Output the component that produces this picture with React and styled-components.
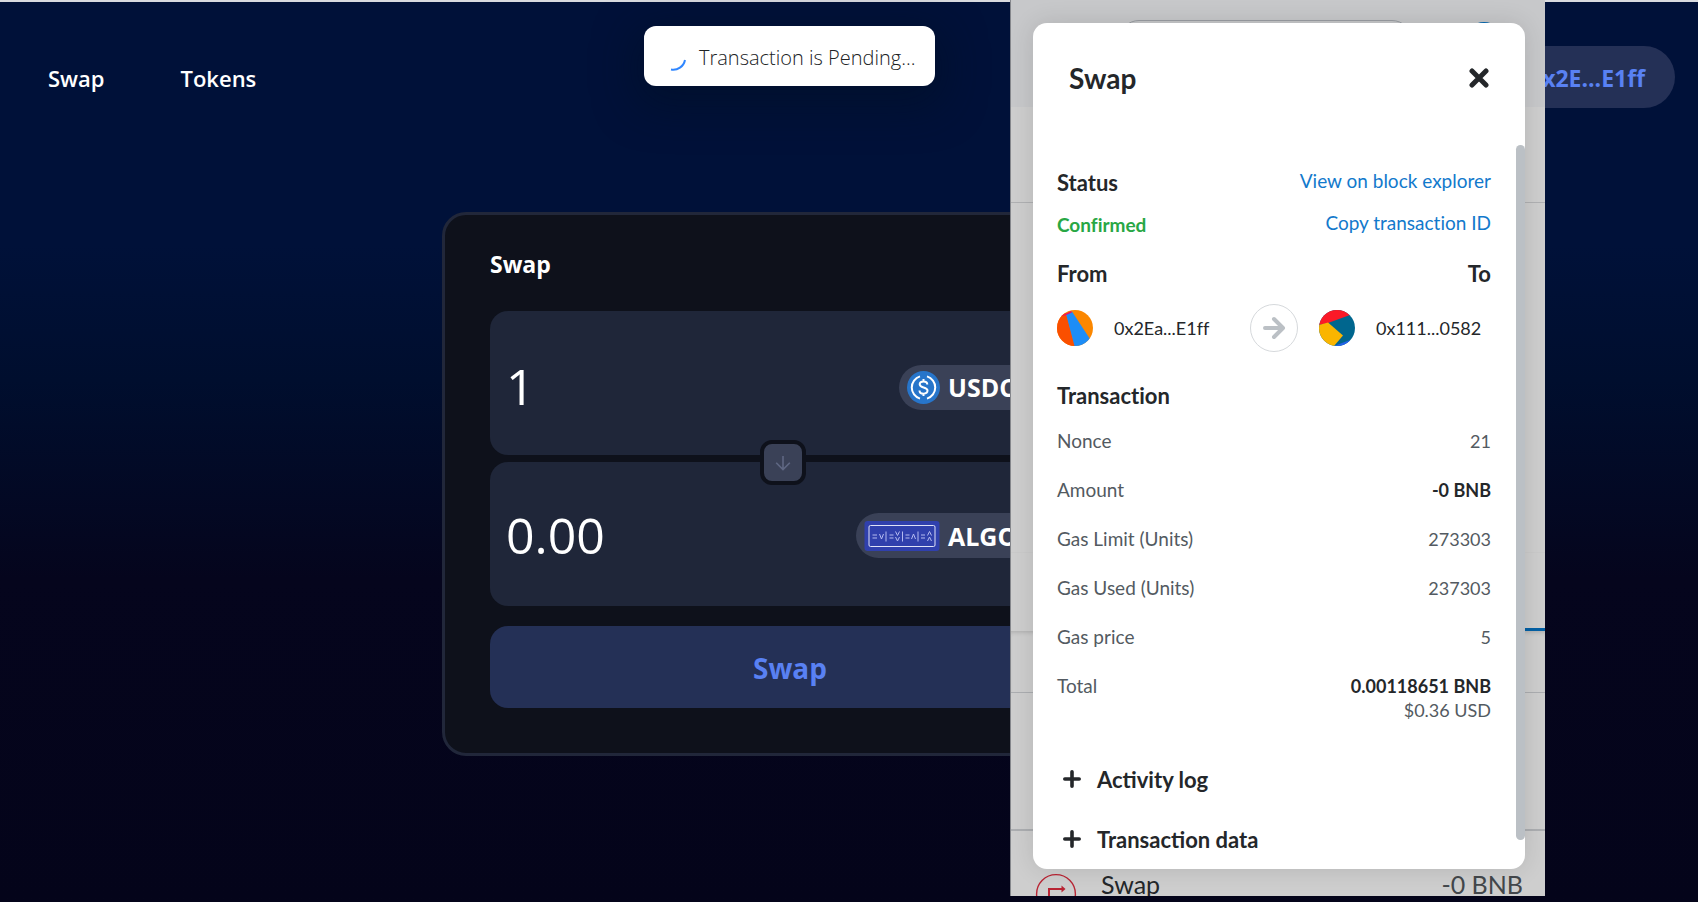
import { useState } from "react";
import styled, { createGlobalStyle } from "styled-components";
import { ChevronDown } from "lucide-react";

const details = [
    { label: "Nonce", value: "21" },
    { label: "Amount", value: "-0 BNB", strong: true },
    { label: "Gas Limit (Units)", value: "273303" },
    { label: "Gas Used (Units)", value: "237303" },
    { label: "Gas price", value: "5" },
    { label: "Total", value: "0.00118651 BNB", strong: true, note: "$0.36 USD" },
];

export default function App(){
    const [amount, setAmount] = useState("1");
    const [open, setOpen] = useState(true);

    return(
        <Page>
            <GlobalStyle />
            <Header>
                <nav>
                    <NavLink href="#swap">Swap</NavLink>
                    <NavLink href="#tokens">Tokens</NavLink>
                </nav>
                <ConnectButton>0x2E...E1ff</ConnectButton>
            </Header>

            <Main>
                <TradeBox>
                    <h4>Swap</h4>
                    <Inputs>
                        <TokenField>
                            <AmountInput aria-label="Amount to pay" value={amount} onChange={(e) => setAmount(e.target.value)} />
                            <TokenButton>
                                <UsdcIcon />
                                <span>USDC</span>
                                <ChevronDown size={20} />
                            </TokenButton>
                        </TokenField>
                        <TokenField>
                            <AmountInput aria-label="Amount to receive" value="0.00" readOnly />
                            <TokenButton>
                                <AlgoIcon />
                                <span>ALGO</span>
                                <ChevronDown size={20} />
                            </TokenButton>
                        </TokenField>
                        <SwitchButton aria-label="Switch tokens">
                            <svg width="16" height="16" viewBox="0 0 16 16" fill="none" stroke="#5f6783" strokeWidth="1.6">
                                <path d="M8 1v13.5M1.2 7.8L8 14.6l6.8-6.8" />
                            </svg>
                        </SwitchButton>
                    </Inputs>
                    <SwapButton>Swap</SwapButton>
                </TradeBox>
            </Main>

            <Toast role="status">
                <svg width="26" height="30" viewBox="0 0 26 30" fill="none" stroke="#2f86ff" strokeWidth="2">
                    <path d="M23 18A12 12 0 0 1 9 27.5" />
                </svg>
                Transaction is Pending...
            </Toast>

            <Wallet>
                <WalletBar>
                    <Network />
                    <Account />
                </WalletBar>
                <WalletAccount />
                <WalletBalance />
                <WalletTabs />
                <WalletGap />
                <WalletSpace />
                <Activity>
                    <svg width="42" height="42" viewBox="0 0 42 42" fill="none" stroke="#b92534">
                        <circle cx="21" cy="21" r="19.4" strokeWidth="1.4" />
                        <path d="M14 24v-8h14" strokeWidth="2" />
                        <path d="M26.5 12.5l4 3.5-4 3.5z" fill="#b92534" stroke="none" />
                    </svg>
                    <span>Swap</span>
                    <strong>-0 BNB</strong>
                </Activity>

                {open && (
                    <Modal role="dialog" aria-label="Swap">
                        <ModalHeader>
                            <h2>Swap</h2>
                            <CloseButton aria-label="Close" onClick={() => setOpen(false)}>
                                <svg width="20" height="20" viewBox="0 0 20 20" stroke="#24272a" strokeWidth="5" strokeLinecap="round">
                                    <path d="M3 3l14 14M17 3L3 17" />
                                </svg>
                            </CloseButton>
                        </ModalHeader>
                        <ModalBody>
                            <Line>
                                <h3>Status</h3>
                                <a href="#explorer">View on block explorer</a>
                            </Line>
                            <Line>
                                <Confirmed>Confirmed</Confirmed>
                                <a href="#copy">Copy transaction ID</a>
                            </Line>
                            <Line $tall>
                                <h3>From</h3>
                                <h3>To</h3>
                            </Line>
                            <Parties>
                                <Party>
                                    <FromIcon />
                                    <span>0x2Ea...E1ff</span>
                                </Party>
                                <ArrowCircle>
                                    <svg width="24" height="24" viewBox="0 0 24 24" fill="none" stroke="#bbc0c5" strokeWidth="4" strokeLinecap="round" strokeLinejoin="round">
                                        <path d="M3 12h17M12 3l9 9-9 9" />
                                    </svg>
                                </ArrowCircle>
                                <Party>
                                    <ToIcon />
                                    <span>0x111...0582</span>
                                </Party>
                            </Parties>
                            <h3>Transaction</h3>
                            <Details>
                                <tbody>
                                    {details.map((row) => (
                                        <DetailRow key={row.label} $strong={row.strong}>
                                            <th scope="row">{row.label}</th>
                                            <td>
                                                {row.value}
                                                {row.note && <Note>{row.note}</Note>}
                                            </td>
                                        </DetailRow>
                                    ))}
                                </tbody>
                            </Details>
                            <Disclosure><PlusIcon />Activity log</Disclosure>
                            <Disclosure><PlusIcon />Transaction data</Disclosure>
                        </ModalBody>
                        <ScrollThumb />
                    </Modal>
                )}
            </Wallet>
        </Page>
    )
}

function UsdcIcon(){
    return(
        <svg width="33" height="33" viewBox="0 0 33 33" fill="none" stroke="#fff" strokeWidth="2">
            <circle cx="16.5" cy="16.5" r="16.5" fill="#2775ca" stroke="none" />
            <path d="M13 5.4a11.6 11.6 0 0 0 0 22.2M20 5.4a11.6 11.6 0 0 1 0 22.2" />
            <path d="M20.3 13.4c0-2-1.5-3-3.8-3s-3.8 1-3.8 2.9c0 4.3 7.8 2 7.8 6.3 0 2-1.6 3.1-4 3.1s-4-1.1-4-3.2M16.5 8v2.4M16.5 22.6V25" />
        </svg>
    )
}

function AlgoIcon(){
    return(
        <svg width="76" height="30" viewBox="0 0 75 30" fill="none" stroke="#b4baf0">
            <rect width="75" height="30" rx="3" fill="#3040ad" stroke="none" />
            <rect x="4.5" y="4.5" width="66" height="21" rx="1.5" stroke="#dfe2f7" />
            <path d="M8 14h4.5M8 17h4.5M15 13l2 5 2-5M21.5 10.5v10M25 14h4M25 17h4M31 10.5l2 4 2-4M31 16l2 4 2-4M38 10.5v10M41 14h4M41 17h4M47 18l2-5 2 5M53.5 10.5v10M56.500 14h4M56.5 17h4M63 14.5l2-4 2 4M63 20l2-4 2 4" />
        </svg>
    )
}

function FromIcon(){
    return(
        <svg width="36" height="36" viewBox="0 0 36 36">
            <clipPath id="from"><circle cx="18" cy="18" r="18" /></clipPath>
            <g clipPath="url(#from)">
                <path d="M0 0h36v36H0z" fill="#fb8700" />
                <path d="M0 4L9 3l9 33H0z" fill="#fa4f00" />
                <path d="M9 4l6-2.5L33 29l-6 7h-9.5z" fill="#1c8df7" />
                <path d="M4 6l10-5 1 1.5-7 3z" fill="#f0125f" />
            </g>
        </svg>
    )
}

function ToIcon(){
    return(
        <svg width="36" height="36" viewBox="0 0 36 36">
            <clipPath id="to"><circle cx="18" cy="18" r="18" /></clipPath>
            <g clipPath="url(#to)">
                <path d="M0 0h36v36H0z" fill="#00668e" />
                <path d="M0 0h36L31 5 9 13 0 15z" fill="#fb1927" />
                <path d="M0 15l9-2.5 15 13L15 36H0z" fill="#fab500" />
                <path d="M15 36l16-6v6z" fill="#2362e9" />
            </g>
        </svg>
    )
}

function PlusIcon(){
    return(
        <svg width="18" height="18" viewBox="0 0 18 18" stroke="#24272a" strokeWidth="3.6" strokeLinecap="round">
            <path d="M9 1.8v14.4M1.8 9h14.4" />
        </svg>
    )
}

const GlobalStyle = createGlobalStyle`
    *{
        box-sizing: border-box;
    }
    body{
        margin: 0;
        background: #04041a;
        font-family: "Open Sans", "Noto Sans", sans-serif;
        color: white;
    }
    h2, h3, h4{
        margin: 0;
    }
    button, input{
        font-family: inherit;
        border: none;
        padding: 0;
        color: inherit;
    }
    button{
        cursor: pointer;
    }
`;

const Page = styled.div`
    position: relative;
    min-height: 100vh;
    border-top: 2px solid #d9dbe0;
    background: linear-gradient(#001139 0%, #001139 27%, #000e2e 42%, #05051d 64%, #04041a 100%);
`;

const Header = styled.header`
    display: flex;
    justify-content: space-between;
    align-items: center;
    padding: 44px 23px 0 48px;
    nav{
        display: flex;
        gap: 76px;
        padding-top: 2px;
    }
`;

const NavLink = styled.a`
    color: white;
    text-decoration: none;
    font-size: 22px;
    line-height: 32px;
    font-weight: 600;
`;

const ConnectButton = styled.button`
    height: 62px;
    padding: 2px 30px 0;
    border-radius: 31px;
    background: #243056;
    color: #5981f3;
    font-size: 23px;
    font-weight: 700;
`;

const Main = styled.main`
    display: flex;
    justify-content: center;
    padding: 104px 118px 0 0;
`;

const TradeBox = styled.section`
    width: 696px;
    padding: 33px 45px 45px;
    border: 3px solid #21273a;
    border-radius: 24px;
    background: #0e111b;
    h4{
        font-size: 23px;
        line-height: 32px;
        font-weight: 700;
    }
`;

const Inputs = styled.div`
    position: relative;
    display: grid;
    grid-template-columns: minmax(0, 1fr);
    gap: 7px;
    margin: 31px 0 20px;
`;

const TokenField = styled.div`
    display: flex;
    align-items: center;
    height: 144px;
    padding: 8px 20px 0 16px;
    border-radius: 18px;
    background: #1f2639;
    & + &{
        padding-top: 3px;
    }
`;

const AmountInput = styled.input`
    flex: 1;
    min-width: 0;
    padding-bottom: 2px;
    background: none;
    font-size: 50px;
    outline: none;
`;

const TokenButton = styled.button`
    display: flex;
    align-items: center;
    gap: 8px;
    height: 45px;
    padding: 0 16px 0 8px;
    border-radius: 23px;
    background: #3a4157;
    font-size: 25px;
    font-weight: 700;
    span{
        width: 78px;
        text-align: left;
    }
`;

const SwitchButton = styled.button`
    position: absolute;
    top: 129px;
    left: 270px;
    display: grid;
    place-items: center;
    width: 46px;
    height: 45px;
    border: 4px solid #0e111b;
    border-radius: 12px;
    background: #3a4157;
`;

const SwapButton = styled.button`
    width: 100%;
    height: 82px;
    padding-top: 2px;
    border-radius: 18px;
    background: #243056;
    color: #5981f3;
    font-size: 28px;
    font-weight: 700;
`;

const Toast = styled.div`
    position: absolute;
    top: 24px;
    left: 644px;
    display: flex;
    align-items: center;
    gap: 11px;
    height: 60px;
    padding: 2px 20px 0 18px;
    border-radius: 12px;
    background: white;
    color: #202224;
    font-size: 20px;
    font-weight: 300;
    white-space: nowrap;
    box-shadow: 0 12px 40px 8px rgba(0, 16, 36, .5);
`;

const Wallet = styled.aside`
    position: absolute;
    top: -2px;
    right: 153px;
    bottom: 6px;
    width: 535px;
    overflow: hidden;
    border-left: 1px solid #85878c;
    background: #cecece;
    color: #24272a;
    font-family: Lato, "Open Sans", sans-serif;
    font-variant-ligatures: none;
`;

const WalletBar = styled.div`
    display: flex;
    justify-content: space-between;
    align-items: flex-start;
    height: 107px;
    padding: 20px 43px 0 108px;
    background: #c7c8ca;
`;

const Network = styled.div`
    width: 293px;
    height: 40px;
    border: 1px solid #9a9ea3;
    border-radius: 20px;
`;

const Account = styled.div`
    width: 36px;
    height: 36px;
    margin: 2px 0;
    border-radius: 50%;
    background: #0568b0;
`;

const WalletAccount = styled.div`
    height: 96px;
    border-bottom: 1px solid #b0b1b3;
`;

const WalletBalance = styled.div`
    height: 350px;
    border-bottom: 1px solid #cacaca;
`;

const WalletTabs = styled.div`
    height: 78px;
    margin-left: 50%;
    border-bottom: 3px solid #0360a5;
`;

const WalletGap = styled.div`
    height: 62px;
    border-bottom: 1px solid #acaeb1;
    box-shadow: inset 0 4px 5px -3px rgba(0, 0, 0, .18);
`;

const WalletSpace = styled.div`
    height: 138px;
    border-bottom: 2px solid #acaeb1;
`;

const Activity = styled.div`
    display: flex;
    align-items: flex-start;
    gap: 24px;
    padding: 42px 22px 0 24px;
    font-size: 25px;
    line-height: 22px;
    span{
        flex: 1;
    }
    strong{
        color: #43474b;
        font-weight: 400;
    }
`;

const Modal = styled.section`
    position: absolute;
    top: 23px;
    left: 22px;
    right: 20px;
    bottom: 27px;
    border-radius: 14px;
    background: white;
    box-shadow: 0 0 24px rgba(0, 0, 0, .12);
    a{
        color: #1279cc;
        text-decoration: none;
        padding-bottom: 4px;
    }
    h3{
        font-size: 22px;
        line-height: 28px;
        font-weight: 700;
    }
`;

const ModalHeader = styled.header`
    display: flex;
    align-items: center;
    justify-content: space-between;
    padding: 39px 36px 0 36px;
    h2{
        font-size: 28px;
        line-height: 32px;
        font-weight: 700;
    }
`;

const CloseButton = styled.button`
    display: flex;
    background: none;
`;

const ModalBody = styled.div`
    padding: 68px 34px 0 24px;
    font-size: 19px;
    line-height: 24px;
`;

const Line = styled.div`
    display: flex;
    align-items: center;
    justify-content: space-between;
    height: ${(props) => props.$tall ? "56px" : "42px"};
`;

const Confirmed = styled.span`
    color: #28a745;
    font-weight: 700;
`;

const Parties = styled.div`
    display: flex;
    align-items: center;
    justify-content: space-between;
    margin: 2px 0 30px;
    font-size: 18px;
`;

const Party = styled.div`
    display: flex;
    align-items: center;
    gap: 21px;
    width: 172px;
`;

const ArrowCircle = styled.div`
    display: grid;
    place-items: center;
    width: 48px;
    height: 48px;
    border: 1px solid #d6d9dc;
    border-radius: 50%;
`;

const Details = styled.table`
    width: 100%;
    margin: 7px 0 27px;
    border-collapse: collapse;
`;

const DetailRow = styled.tr`
    height: 49px;
    vertical-align: top;
    th{
        padding: 12px 0 0;
        color: #535a61;
        font-weight: 400;
        text-align: left;
    }
    td{
        padding: 12px 0 0;
        color: ${(props) => props.$strong ? "#24272a" : "#535a61"};
        font-size: 18px;
        font-weight: ${(props) => props.$strong ? 700 : 400};
        text-align: right;
    }
`;

const Note = styled.div`
    color: #535a61;
    font-weight: 400;
`;

const Disclosure = styled.button`
    display: flex;
    align-items: center;
    gap: 16px;
    height: 60px;
    padding-left: 6px;
    background: none;
    color: #24272a;
    font-size: 22px;
    font-weight: 700;
`;

const ScrollThumb = styled.div`
    position: absolute;
    top: 122px;
    right: 0;
    bottom: 29px;
    width: 9px;
    border-radius: 5px;
    background: #bbc0c5;
`;
